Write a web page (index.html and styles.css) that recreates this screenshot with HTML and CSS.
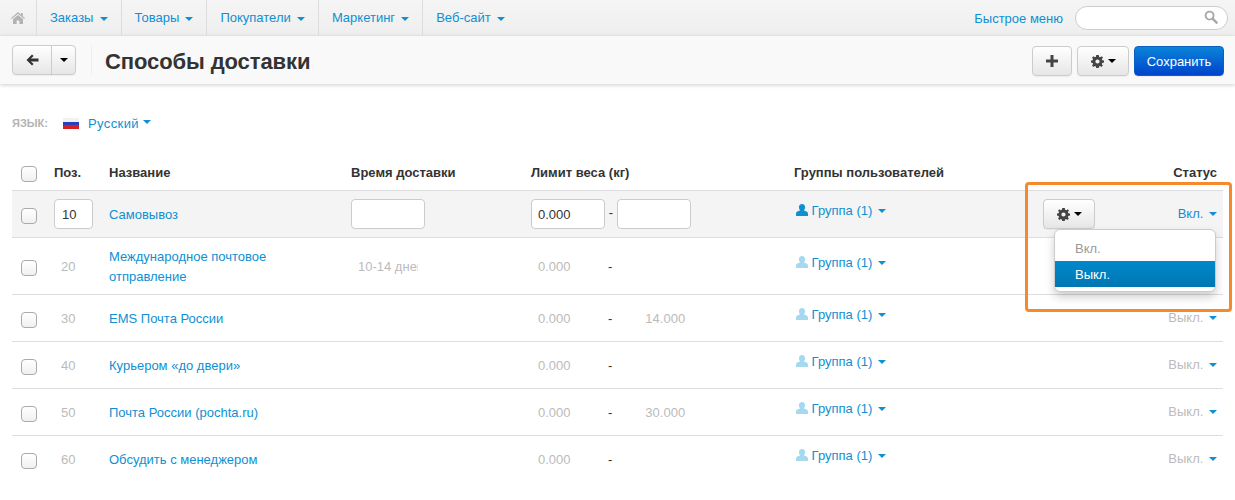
FILE: index.html
```html
<!DOCTYPE html>
<html lang="en">
<head>
	<meta charset="UTF-8">
	<title>Способы доставки</title>
	<link rel="stylesheet" href="styles.css">
</head>
<body>
	<nav class="topNav">
		<a class="navHome" href="#">
			<svg width="14" height="12" viewBox="0 0 14 12"><path d="M7 0 L10 2.6 V1 H11.8 V4.2 L14 6.2 L13.2 7 L7 1.7 L.8 7 L0 6.2Z M2 7.2 L7 3 L12 7.2 V12 H8.4 V8.4 H5.6 V12 H2Z" fill="#b3b3b3"/></svg>
		</a>
		<a class="navItem" href="#">Заказы <i class="caret"></i></a>
		<a class="navItem" href="#">Товары <i class="caret"></i></a>
		<a class="navItem" href="#">Покупатели <i class="caret"></i></a>
		<a class="navItem" href="#">Маркетинг <i class="caret"></i></a>
		<a class="navItem noLine" href="#">Веб-сайт <i class="caret"></i></a>
		<a class="quickMenu" href="#">Быстрое меню</a>
		<div class="searchBox">
			<svg width="14" height="14" viewBox="0 0 15 15"><circle cx="6" cy="6" r="4.3" fill="none" stroke="#a8a8a8" stroke-width="2"/><path d="M9.2 9.2 L13.5 13.5" stroke="#a8a8a8" stroke-width="2.6" stroke-linecap="round"/></svg>
		</div>
	</nav>

	<header class="subNav">
		<div class="btnGroup">
			<button class="btn btnBack">
				<svg width="13" height="12" viewBox="0 0 13 12"><path d="M6 .5 L7.6 2.1 L4.9 4.6 H12.5 V7.4 H4.9 L7.6 9.9 L6 11.5 L.5 6Z" fill="#333"/></svg>
			</button>
			<button class="btn btnDrop"><i class="caret dark"></i></button>
		</div>
		<h1 class="pageTitle">Способы доставки</h1>
		<button class="btn btnAdd">
			<svg width="12" height="12" viewBox="0 0 12 12"><path d="M4.5 0 H7.5 V4.5 H12 V7.5 H7.5 V12 H4.5 V7.5 H0 V4.5 H4.5Z" fill="#444"/></svg>
		</button>
		<button class="btn btnGear">
			<svg class="gear" width="13" height="13" viewBox="0 0 13 13"><use href="#gearIcon"/></svg>
			<i class="caret dark"></i>
		</button>
		<button class="btn btnSave">Сохранить</button>
	</header>

	<svg class="iconDefs" width="0" height="0">
		<defs>
			<path id="gearIcon" fill-rule="evenodd" fill="#444" d="M5.2 0 H7.8 L8.1 1.7 L9.4 2.3 L10.9 1.3 L12 2.8 L10.8 4 L11.3 5.2 L13 5.4 V7.6 L11.3 7.9 L10.8 9.1 L11.8 10.5 L10.4 12 L9.1 10.9 L8 11.4 L7.8 13 H5.2 L4.9 11.4 L3.8 10.9 L2.5 12 L1 10.5 L2.1 9.1 L1.6 7.9 L0 7.6 V5.4 L1.6 5.2 L2.1 4 L1 2.7 L2.4 1.2 L3.7 2.2 L4.9 1.7Z M6.5 4.4 A2.1 2.1 0 1 0 6.5 8.6 A2.1 2.1 0 1 0 6.5 4.4Z"/>
			<path id="userIcon" d="M6 0 C7.9 0 9.1 1.4 9.1 3.3 C9.1 4.6 8.5 5.6 7.8 6.3 C8.6 7 12 7.4 12 9.6 V12 H0 V9.6 C0 7.4 3.4 7 4.2 6.3 C3.5 5.6 2.9 4.6 2.9 3.3 C2.9 1.4 4.1 0 6 0Z"/>
		</defs>
	</svg>

	<section class="content">
		<div class="langBar">
			<span class="langLabel">ЯЗЫК:</span>
			<span class="flag"></span>
			<a href="#">Русский</a>
			<i class="caret up"></i>
		</div>

		<div class="tableWrap">
			<table class="methods">
				<colgroup>
					<col class="colCheck"><col class="colPos"><col class="colName"><col class="colTime"><col class="colLimit"><col class="colGroup"><col class="colTools"><col class="colStatus">
				</colgroup>
				<thead>
					<tr>
						<th><span class="check"></span></th>
						<th>Поз.</th>
						<th>Название</th>
						<th>Время доставки</th>
						<th>Лимит веса (кг)</th>
						<th>Группы пользователей</th>
						<th></th>
						<th class="right">Статус</th>
					</tr>
				</thead>
				<tbody>
					<tr class="active">
						<td><span class="check"></span></td>
						<td><input class="ipt iptPos" value="10"></td>
						<td><a href="#">Самовывоз</a></td>
						<td><input class="ipt iptWide"></td>
						<td><input class="ipt iptWide" value="0.000"> <span class="dash">-</span> <input class="ipt iptWide"></td>
						<td><a class="groupLink" href="#"><svg width="12" height="12" viewBox="0 0 12 12"><use href="#userIcon"/></svg> Группа (1) <i class="caret"></i></a></td>
						<td class="toolsCell">
							<div class="toolsBox">
								<button class="btn btnGear small">
									<svg class="gear" width="13" height="13" viewBox="0 0 13 13"><use href="#gearIcon"/></svg>
									<i class="caret dark"></i>
								</button>
								<ul class="dropMenu">
									<li>Вкл.</li>
									<li class="current">Выкл.</li>
								</ul>
							</div>
						</td>
						<td class="right"><a class="status" href="#">Вкл. <i class="caret"></i></a></td>
					</tr>
					<tr class="off tall">
						<td><span class="check"></span></td>
						<td class="posText">20</td>
						<td><a class="twoLine" href="#">Международное почтовое отправление</a></td>
						<td class="timeText"><span class="clip">10-14 дней</span></td>
						<td class="limit"><span class="limitFrom">0.000</span><span class="dash">-</span><span class="limitTo"></span></td>
						<td><a class="groupLink" href="#"><svg width="12" height="12" viewBox="0 0 12 12"><use href="#userIcon"/></svg> Группа (1) <i class="caret"></i></a></td>
						<td></td>
						<td class="right"></td>
					</tr>
					<tr class="off">
						<td><span class="check"></span></td>
						<td class="posText">30</td>
						<td><a href="#">EMS Почта России</a></td>
						<td></td>
						<td class="limit"><span class="limitFrom">0.000</span><span class="dash">-</span><span class="limitTo">14.000</span></td>
						<td><a class="groupLink" href="#"><svg width="12" height="12" viewBox="0 0 12 12"><use href="#userIcon"/></svg> Группа (1) <i class="caret"></i></a></td>
						<td></td>
						<td class="right"><a class="status" href="#"><span>Выкл.</span> <i class="caret"></i></a></td>
					</tr>
					<tr class="off">
						<td><span class="check"></span></td>
						<td class="posText">40</td>
						<td><a href="#">Курьером «до двери»</a></td>
						<td></td>
						<td class="limit"><span class="limitFrom">0.000</span><span class="dash">-</span><span class="limitTo"></span></td>
						<td><a class="groupLink" href="#"><svg width="12" height="12" viewBox="0 0 12 12"><use href="#userIcon"/></svg> Группа (1) <i class="caret"></i></a></td>
						<td></td>
						<td class="right"><a class="status" href="#"><span>Выкл.</span> <i class="caret"></i></a></td>
					</tr>
					<tr class="off">
						<td><span class="check"></span></td>
						<td class="posText">50</td>
						<td><a href="#">Почта России (pochta.ru)</a></td>
						<td></td>
						<td class="limit"><span class="limitFrom">0.000</span><span class="dash">-</span><span class="limitTo">30.000</span></td>
						<td><a class="groupLink" href="#"><svg width="12" height="12" viewBox="0 0 12 12"><use href="#userIcon"/></svg> Группа (1) <i class="caret"></i></a></td>
						<td></td>
						<td class="right"><a class="status" href="#"><span>Выкл.</span> <i class="caret"></i></a></td>
					</tr>
					<tr class="off">
						<td><span class="check"></span></td>
						<td class="posText">60</td>
						<td><a href="#">Обсудить с менеджером</a></td>
						<td></td>
						<td class="limit"><span class="limitFrom">0.000</span><span class="dash">-</span><span class="limitTo"></span></td>
						<td><a class="groupLink" href="#"><svg width="12" height="12" viewBox="0 0 12 12"><use href="#userIcon"/></svg> Группа (1) <i class="caret"></i></a></td>
						<td></td>
						<td class="right"><a class="status" href="#"><span>Выкл.</span> <i class="caret"></i></a></td>
					</tr>
				</tbody>
			</table>
			<div class="markBox"></div>
		</div>
	</section>
</body>
</html>
```

FILE: styles.css
```css
html,body{
	height:500px;
	overflow:hidden;
}
body{
	margin:0;
	background:#fff;
	font-family:"Liberation Sans",Arial,sans-serif;
	font-size:13px;
	color:#333;
}
a{
	color:#0e90d2;
	text-decoration:none;
}
.caret{
	display:inline-block;
	width:0;
	height:0;
	vertical-align:middle;
	margin-left:2px;
	border-top:4px solid #0e90d2;
	border-left:4px solid transparent;
	border-right:4px solid transparent;
}
.caret.dark{
	border-top-color:#000;
}
.caret.up{
	margin:0 0 3px;
}
.iconDefs{
	position:absolute;
}

/* top menu */
.topNav{
	display:flex;
	align-items:center;
	height:36px;
	background:linear-gradient(#f5f5f5,#eee);
}
.navHome{
	display:flex;
	align-items:center;
	justify-content:center;
	width:36px;
	height:35px;
	padding-bottom:1px;
	border-right:1px solid #ddd;
}
.navItem{
	display:block;
	padding:0 13px;
	line-height:36px;
	border-right:1px solid #ddd;
}
.navItem .caret{
	margin-left:2.5px;
}
.navItem.noLine{
	border-right:0;
}
.quickMenu{
	margin-left:auto;
}
.searchBox{
	display:flex;
	align-items:center;
	justify-content:flex-end;
	box-sizing:border-box;
	width:153px;
	height:24px;
	margin:0 7px 0 12px;
	padding:0 9px 2px 0;
	background:#fff;
	border:1px solid #ccc;
	border-radius:12px;
}

/* title bar */
.subNav{
	display:flex;
	align-items:center;
	box-sizing:border-box;
	height:48px;
	padding:0 11px 0 12px;
	background:#f9f9f9;
	box-shadow:0 1px 4px rgba(0,0,0,.2);
}
.btn{
	display:flex;
	align-items:center;
	justify-content:center;
	box-sizing:border-box;
	height:30px;
	padding:0;
	font-family:inherit;
	font-size:13px;
	background:linear-gradient(#fff,#e6e6e6);
	border:1px solid #ccc;
	border-radius:4px;
	box-shadow:0 1px 1px rgba(0,0,0,.05);
}
.btnGroup{
	display:flex;
	padding-right:15px;
	border-right:1px solid #eee;
}
.btnBack{
	width:40px;
	border-radius:4px 0 0 4px;
}
.btnDrop{
	width:25px;
	margin-left:-1px;
	border-radius:0 4px 4px 0;
}
.btnDrop .caret{
	margin:0;
}
.pageTitle{
	flex:1;
	margin:0 0 0 13px;
	padding-top:3px;
	font-size:22px;
	line-height:30px;
	letter-spacing:-.1px;
	color:#333;
}
.btnAdd{
	width:40px;
	margin-top:2px;
}
.btnGear{
	width:52px;
	margin:2px 0 0 5px;
}
.btnGear .caret{
	margin-left:4px;
}
.btnSave{
	width:90px;
	margin:2px 0 0 5px;
	color:#fff;
	background:linear-gradient(#0a84d8,#0044cc);
	border-color:#0b5fc0;
}

/* language */
.content{
	padding:0 12px;
}
.langBar{
	display:flex;
	align-items:center;
	height:20px;
	margin-top:29px;
}
.langBar a{
	letter-spacing:.4px;
}
.langLabel{
	width:51px;
	font-size:11px;
	font-weight:bold;
	color:#b3b3b3;
}
.flag{
	width:16px;
	height:11px;
	margin-right:9px;
	background:linear-gradient(#f2f2f2 0,#f2f2f2 4px,#2a3fc0 4px,#2a3fc0 7px,#d82020 7px);
}
.langBar .caret{
	margin-left:4px;
}

/* table */
.tableWrap{
	position:relative;
	margin-top:24px;
}
.methods{
	width:1211px;
	table-layout:fixed;
	border-collapse:collapse;
}
.colCheck{width:42px;}
.colPos{width:55px;}
.colName{width:242px;}
.colTime{width:180px;}
.colLimit{width:263px;}
.colGroup{width:249px;}
.colTools{width:100px;}
.colStatus{width:80px;}
.methods th{
	height:31px;
	padding:0 0 2px;
	text-align:left;
	font-size:13px;
	color:#333;
}
.methods td{
	height:46px;
	padding:0;
	border-top:1px solid #ddd;
	vertical-align:middle;
}
.methods .right{
	padding-right:6px;
	text-align:right;
}
.methods tr.active td{
	background:#f4f4f4;
}
.methods tr.tall td{
	height:56px;
}
.check{
	display:block;
	box-sizing:border-box;
	width:16px;
	height:16px;
	margin-left:9px;
	background:linear-gradient(#fff,#f0f0f0);
	border:1px solid #aaa;
	border-radius:4px;
}
th .check{
	margin-top:2px;
}
td .check{
	margin-top:3px;
}
.ipt{
	box-sizing:border-box;
	width:74px;
	height:30px;
	padding:0 6px;
	font-family:inherit;
	font-size:13px;
	color:#333;
	background:#fff;
	border:1px solid #ccc;
	border-radius:4px;
	vertical-align:middle;
}
.iptPos{
	width:39px;
	padding:0 7px;
}
.dash{
	color:#333;
}
.off td{
	color:#bbb;
}
.posText{
	padding-left:7px !important;
}
.twoLine{
	display:block;
	width:190px;
	margin-top:2px;
	line-height:20px;
}
.timeText{
	padding-left:7px !important;
}
.clip{
	display:block;
	width:60px;
	overflow:hidden;
	white-space:nowrap;
}
.limit{
	font-size:13px;
}
.limitFrom{
	display:inline-block;
	width:70px;
	padding-left:7px;
}
.limitTo{
	display:inline-block;
	padding-left:33px;
}
.off .dash{
	color:#333;
}
.groupLink svg{
	margin:0 0 0 2px;
	vertical-align:-1px;
	fill:#0e90d2;
}
.groupLink{
	position:relative;
	top:-4px;
}
.off .groupLink svg{
	fill:#a5d9f0;
}
.status span{
	color:#bbb;
}
.status{
	position:relative;
	top:-1px;
}
.toolsBox{
	position:relative;
}
.btn.small{
	margin:0;
}
.dropMenu{
	position:absolute;
	z-index:5;
	top:30px;
	left:11px;
	box-sizing:border-box;
	width:162px;
	margin:0;
	padding:5px 0 4px;
	list-style:none;
	background:#fff;
	border:1px solid #ccc;
	border-radius:6px;
	box-shadow:0 5px 10px rgba(0,0,0,.2);
}
.dropMenu li{
	height:26px;
	padding-left:20px;
	line-height:28px;
	color:#999;
}
.dropMenu .current{
	color:#fff;
	background:linear-gradient(#0088cc,#0077b3);
}
.markBox{
	position:absolute;
	z-index:6;
	top:25px;
	left:1013px;
	box-sizing:border-box;
	width:207px;
	height:130px;
	border:3px solid #f58a2a;
	border-radius:4px;
	pointer-events:none;
}
```
